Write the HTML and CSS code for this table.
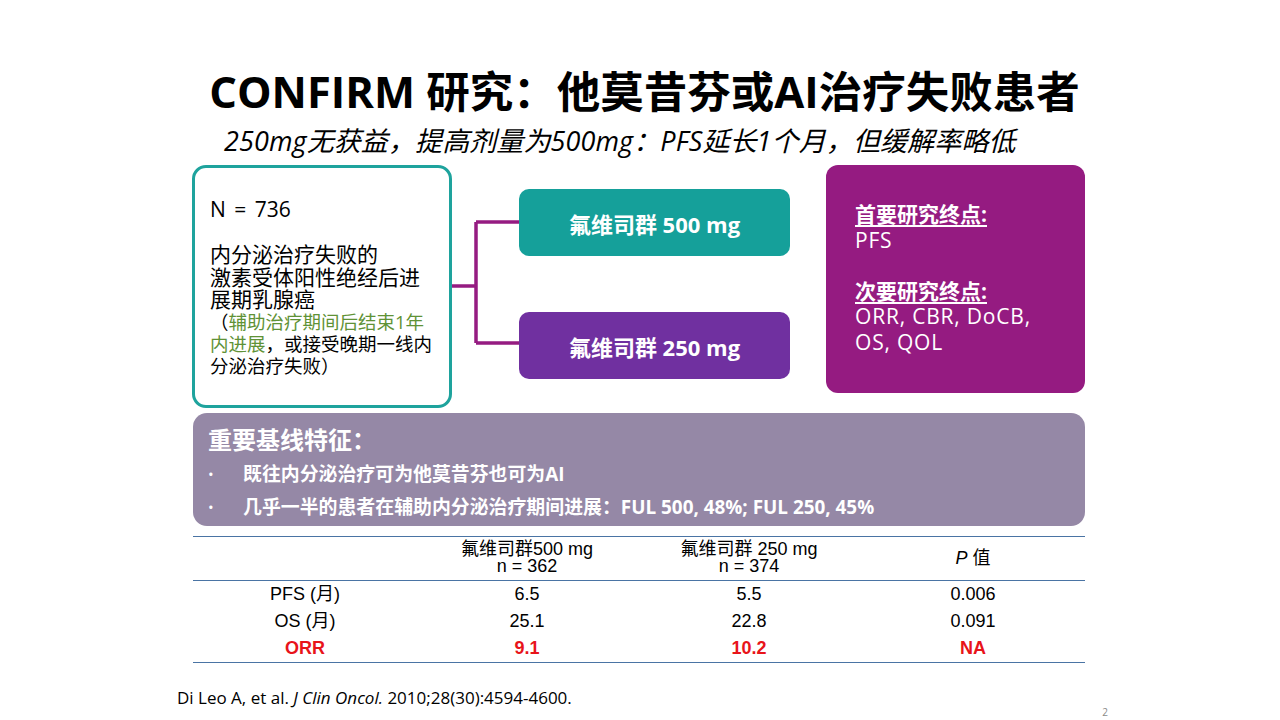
FILE: index.html
```html
<!DOCTYPE html>
<html lang="zh-CN">
<head>
<meta charset="utf-8">
<title>CONFIRM 研究</title>
<link rel="stylesheet" href="styles.css">
</head>
<body>
<div class="slide">
  <h1 class="title">CONFIRM 研究：他莫昔芬或AI治疗失败患者</h1>
  <p class="subtitle">250mg无获益，提高剂量为500mg：PFS延长1个月，但缓解率略低</p>

  <div class="design">
    <div class="pop">
      <div class="pop-main">
        <div class="pop-n">N = 736</div>
        <div>&nbsp;</div>
        <div>内分泌治疗失败的</div>
        <div>激素受体阳性绝经后进</div>
        <div>展期乳腺癌</div>
      </div>
      <div class="pop-note">
        <div>（<span class="green">辅助治疗期间后结束1年</span></div>
        <div><span class="green">内进展</span>，或接受晚期一线内</div>
        <div>分泌治疗失败）</div>
      </div>
    </div>
    <div class="connector">
      <svg width="67" height="243" viewBox="0 0 67 243">
        <path d="M0 121 H24 M24 57 V178 M24 57 H67 M24 178 H67" stroke="#951b81" stroke-width="3.5" fill="none"/>
      </svg>
    </div>
    <div class="arms">
      <div class="arm arm-teal">氟维司群 500 mg</div>
      <div class="arm arm-purple">氟维司群 250 mg</div>
    </div>
    <div class="endpoints">
      <div class="ep-head">首要研究终点:</div>
      <div>PFS</div>
      <div>&nbsp;</div>
      <div class="ep-head">次要研究终点:</div>
      <div>ORR, CBR, DoCB,</div>
      <div>OS, QOL</div>
    </div>
  </div>

  <div class="baseline">
    <div class="bl-title">重要基线特征：</div>
    <ul class="bl-list">
      <li>既往内分泌治疗可为他莫昔芬也可为AI</li>
      <li>几乎一半的患者在辅助内分泌治疗期间进展：FUL 500, 48%; FUL 250, 45%</li>
    </ul>
  </div>

  <table class="results">
    <colgroup>
      <col class="c1"><col class="c2"><col class="c3"><col class="c4">
    </colgroup>
    <thead>
      <tr>
        <th></th>
        <th>氟维司群500 mg<br>n = 362</th>
        <th>氟维司群 250 mg<br>n = 374</th>
        <th><i>P</i> 值</th>
      </tr>
    </thead>
    <tbody>
      <tr><td>PFS (月)</td><td>6.5</td><td>5.5</td><td>0.006</td></tr>
      <tr><td>OS (月)</td><td>25.1</td><td>22.8</td><td>0.091</td></tr>
      <tr class="red"><td>ORR</td><td>9.1</td><td>10.2</td><td>NA</td></tr>
    </tbody>
  </table>

  <div class="footer">
    <p class="ref">Di Leo A, et al. <i>J Clin Oncol.</i> 2010;28(30):4594-4600.</p>
    <span class="pagenum">2</span>
  </div>
</div>
</body>
</html>
```

FILE: styles.css
```css
html, body {
  margin: 0;
  padding: 0;
  background: #ffffff;
}

body {
  width: 1280px;
  height: 720px;
  overflow: hidden;
  font-family: "Open Sans", "Noto Sans CJK SC", sans-serif;
  color: #000;
}

.slide {
  width: 1280px;
  height: 720px;
  display: flex;
  flex-direction: column;
}

.title {
  margin: 66px 0 0 0;
  font-size: 43.5px;
  line-height: 52px;
  font-weight: 700;
  text-align: center;
  padding-left: 9px;
}

.subtitle {
  margin: 6px 0 0 224px;
  font-size: 27px;
  line-height: 34px;
  font-style: italic;
  font-weight: 400;
  white-space: nowrap;
  letter-spacing: 0.1px;
}

.design {
  margin: 7px 0 0 192px;
  width: 893px;
  height: 243px;
  display: grid;
  grid-template-columns: 260px 67px 271px 295px;
}

.pop {
  box-sizing: border-box;
  height: 243px;
  border: 3px solid #1ea39d;
  border-radius: 14px;
  padding: 30px 0 0 15px;
  white-space: nowrap;
}

.pop-main {
  font-size: 21px;
  line-height: 22.5px;
}

.pop-n {
  word-spacing: 3px;
}

.pop-note {
  font-size: 18.5px;
  line-height: 22px;
  margin-top: 0.5px;
}

.green {
  color: #5f9236;
}

.connector svg {
  display: block;
}

.arms {
  display: flex;
  flex-direction: column;
  padding-top: 24px;
  gap: 56px;
}

.arm {
  height: 67px;
  border-radius: 10px;
  color: #fff;
  font-weight: 700;
  font-size: 22px;
  display: flex;
  align-items: center;
  justify-content: center;
}

.arm-teal {
  background: #15a09a;
}

.arm-purple {
  background: #7030a0;
}

.endpoints {
  margin-left: 36px;
  box-sizing: border-box;
  height: 228px;
  background: #951b81;
  border-radius: 12px;
  color: #fff;
  padding: 37px 0 0 29px;
  font-size: 21px;
  line-height: 25.5px;
  letter-spacing: 0.8px;
}

.ep-head {
  font-weight: 700;
  letter-spacing: 0;
  text-decoration: underline;
  text-underline-offset: 3px;
  text-decoration-thickness: 1.5px;
}

.baseline {
  margin: 5px 0 0 193px;
  width: 892px;
  height: 113px;
  box-sizing: border-box;
  background: #9588a6;
  border-radius: 14px;
  color: #fff;
  padding: 12px 0 0 15px;
}

.bl-title {
  font-size: 24px;
  font-weight: 700;
  line-height: 30px;
}

.bl-list {
  list-style: none;
  margin: 3px 0 0 0;
  padding: 0;
}

.bl-list li {
  position: relative;
  padding-left: 35px;
  font-size: 18.9px;
  font-weight: 700;
  line-height: 33px;
  white-space: nowrap;
}

.bl-list li::before {
  content: "•";
  position: absolute;
  left: 0;
  top: 0;
  font-weight: 400;
  font-size: 15px;
}

.results {
  margin: 10px 0 0 193px;
  width: 892px;
  border-collapse: collapse;
  table-layout: fixed;
  font-family: "Liberation Sans", "Noto Sans CJK SC", sans-serif;
  font-size: 18px;
  border-top: 1.5px solid #4a74a4;
  border-bottom: 1.5px solid #4a74a4;
}

.c1 { width: 224px; }
.c2 { width: 220px; }
.c3 { width: 224px; }
.c4 { width: 224px; }

.results th {
  font-weight: 400;
  line-height: 17px;
  padding: 4px 0 5px 0;
  text-align: center;
  border-bottom: 1.5px solid #4a74a4;
  white-space: nowrap;
}

.results th i {
  font-style: italic;
}

.results td {
  text-align: center;
  height: 27px;
  padding: 0;
  line-height: 27px;
}

.results tr.red td {
  color: #e8141a;
  font-weight: 700;
}

.footer {
  margin: 24px 0 0 177px;
  width: 931px;
  display: flex;
  justify-content: space-between;
  align-items: flex-end;
}

.ref {
  margin: 0;
  font-size: 17px;
  line-height: 22px;
  letter-spacing: 0;
}

.pagenum {
  font-size: 10px;
  color: #8a8a8a;
  line-height: 10px;
  margin-bottom: -8px;
}
```
